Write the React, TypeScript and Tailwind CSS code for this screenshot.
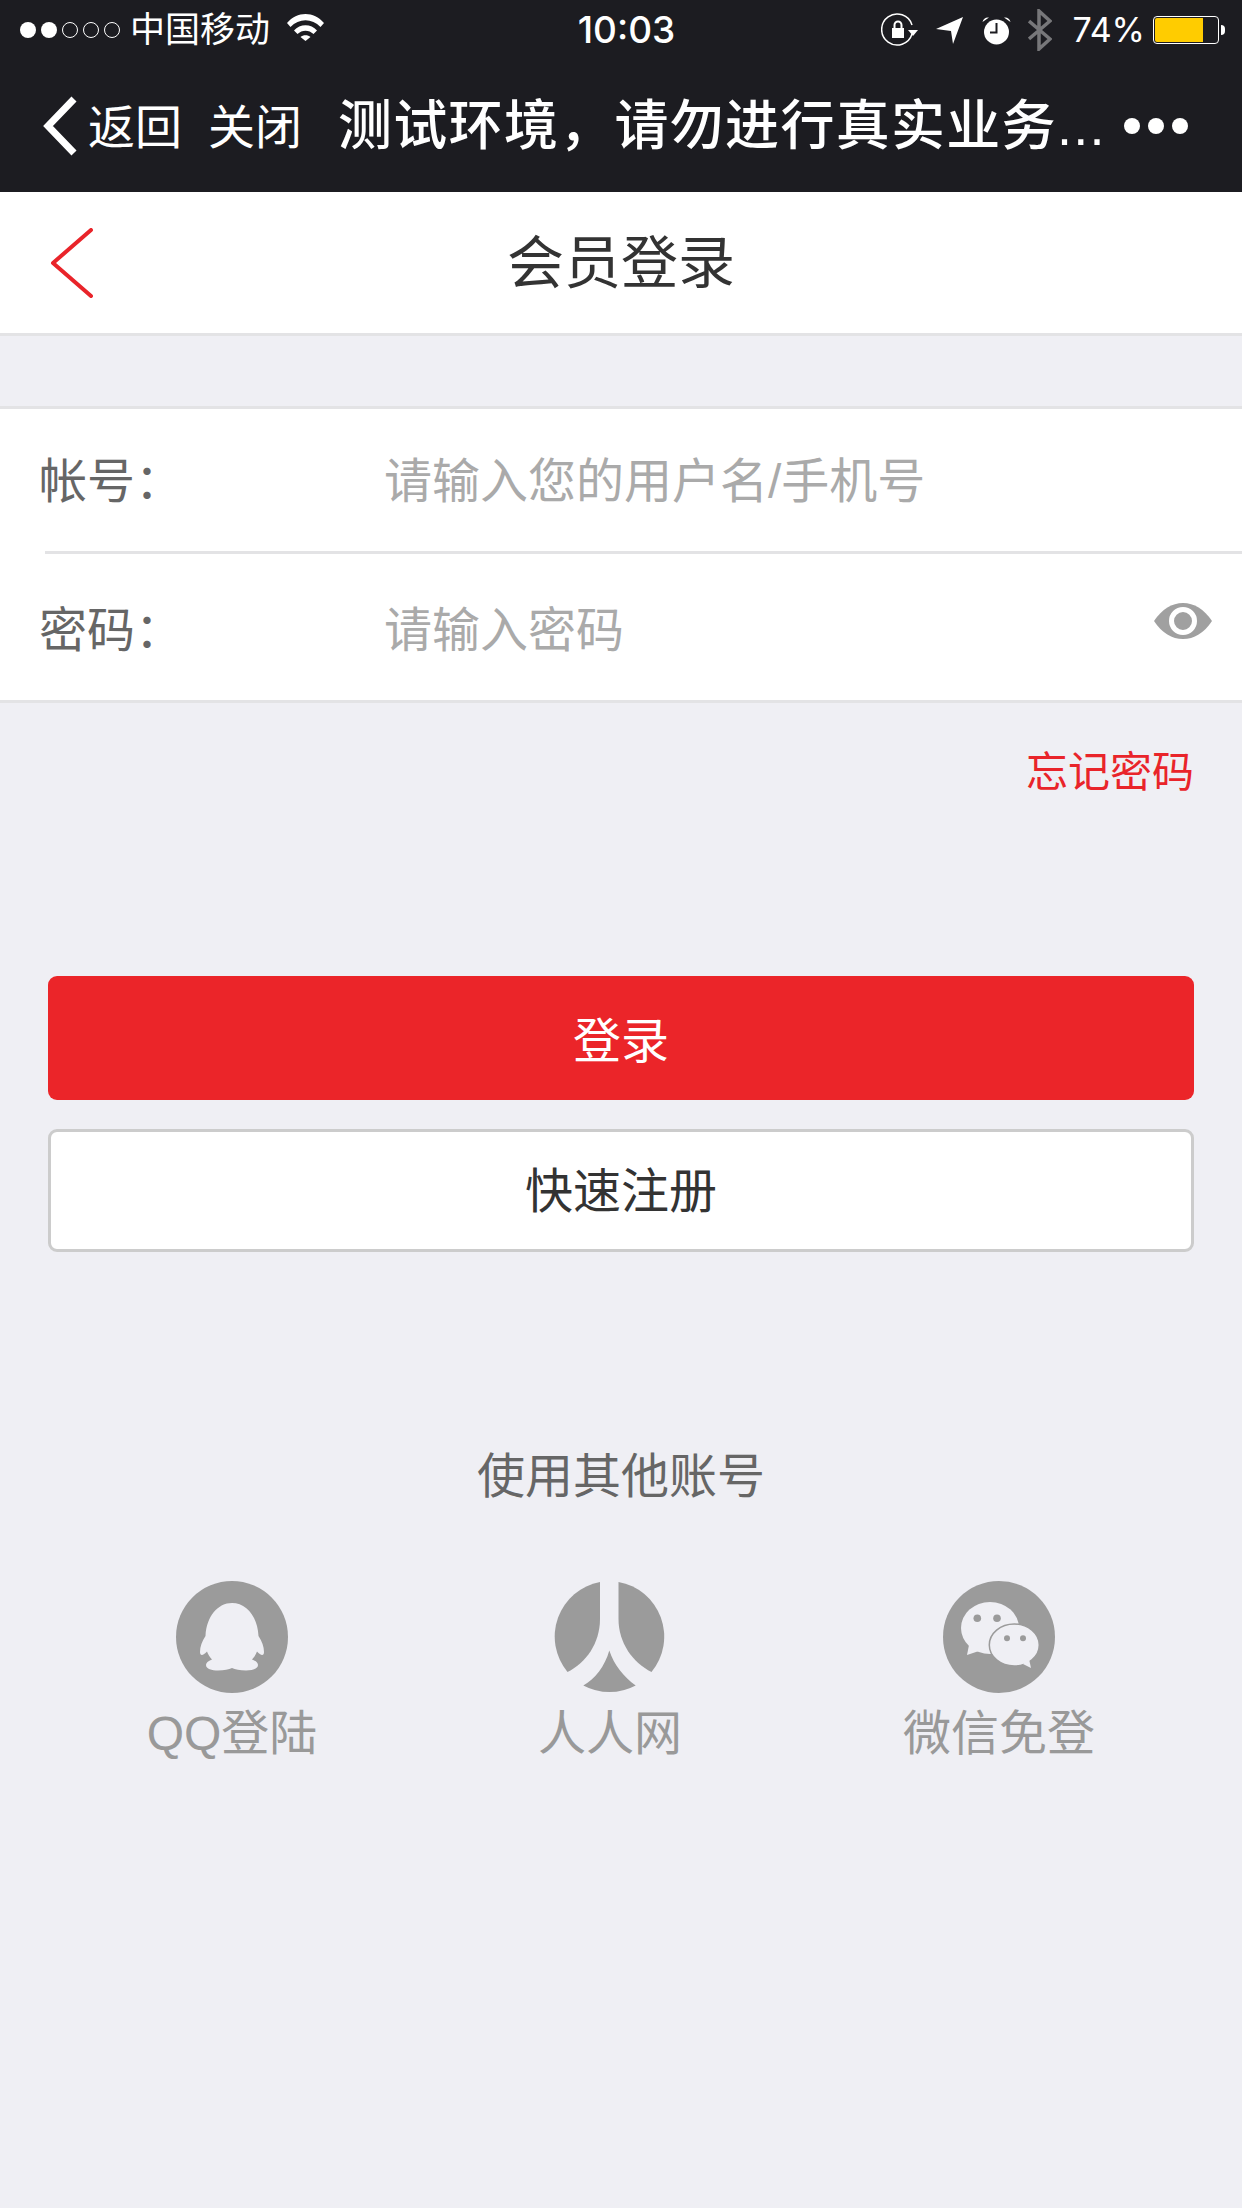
export default function App() {
  return (
    <div className="w-[1242px] h-[2208px] bg-[#efeff4] font-['Liberation_Sans','Noto_Sans_CJK_SC',sans-serif] overflow-hidden">
      <div className="h-[192px] bg-[#1c1c21] text-white">
        <StatusBar />
        <NavBar />
      </div>

      <div className="h-[144px] bg-white border-b-[3px] border-[#e3e3e5] flex items-center relative">
        <svg className="ml-[50px]" width="44" height="70" viewBox="0 0 44 70" fill="none">
          <path d="M41 2 L3 35 L41 68" stroke="#e9242a" strokeWidth="4" strokeLinecap="round" strokeLinejoin="round" />
        </svg>
        <div className="absolute inset-x-0 text-center text-[57px] leading-[70px] text-[#333]">会员登录</div>
      </div>

      <div className="mt-[70px] bg-white border-y-[3px] border-[#e3e3e5]">
        <div className="h-[142px] flex items-center pl-[39px] pt-[3px] text-[48px]">
          <span className="w-[345px] text-[#666]">帐号：</span>
          <span className="text-[#aaa]">请输入您的用户名/手机号</span>
        </div>
        <div className="ml-[45px] h-[3px] bg-[#e3e3e5]" />
        <div className="h-[146px] flex items-center pl-[39px] pr-[30px] pt-[8px] text-[48px]">
          <span className="w-[345px] text-[#666]">密码：</span>
          <span className="text-[#aaa]">请输入密码</span>
          <svg className="ml-auto mb-[20px]" width="58" height="36" viewBox="0 0 58 36">
            <path d="M0 18 C8 6 18 0 29 0 C40 0 50 6 58 18 C50 30 40 36 29 36 C18 36 8 30 0 18Z" fill="#a0a0a0" />
            <circle cx="29" cy="18" r="11.500" fill="#a0a0a0" stroke="#fff" strokeWidth="5" />
          </svg>
        </div>
      </div>

      <div className="mt-[42px] pr-[48px] text-right text-[42px] leading-[56px] text-[#e9242a]">忘记密码</div>

      <div className="mt-[175px] mx-[48px] flex flex-col gap-[29px]">
        <div className="h-[124px] pt-[7px] rounded-[9px] bg-[#eb2529] text-white text-[48px] flex items-center justify-center">登录</div>
        <div className="h-[123px] pt-[3px] rounded-[9px] bg-white border-[3px] border-[#ccc] text-[#333] text-[48px] flex items-center justify-center">快速注册</div>
      </div>

      <div className="mt-[191px] text-center text-[48px] leading-[68px] text-[#666]">使用其他账号</div>

      <div className="mt-[70px] flex pl-[132px]">
        <Social label="QQ登陆" icon={<QqIcon />} />
        <Social className="ml-[178px]" label="人人网" icon={<RenrenIcon />} />
        <Social className="ml-[189px]" label="微信免登" icon={<WechatIcon />} />
      </div>
    </div>
  );
}

function StatusBar() {
  return (
    <div className="h-[60px] pl-[20px] pr-[17px] grid grid-cols-[1fr_auto_1fr] items-center">
      <div className="flex items-center">
        <div className="flex gap-[5px]">
          <span className="w-[16px] h-[16px] rounded-full bg-white" />
          <span className="w-[16px] h-[16px] rounded-full bg-white" />
          <span className="w-[16px] h-[16px] rounded-full border border-white" />
          <span className="w-[16px] h-[16px] rounded-full border border-white" />
          <span className="w-[16px] h-[16px] rounded-full border border-white" />
        </div>
        <span className="ml-[10px] text-[35px] leading-[44px]">中国移动</span>
        <svg className="ml-[17px] mb-[6px]" width="37" height="27" viewBox="0 0 37 27" fill="#fff">
          <path d="M0 9 C10 -3 27 -3 37 9 L33.500 13 C25 4 12 4 3.500 13Z" />
          <path d="M7 16.500 C13 9.500 24 9.500 30 16.500 L26.500 20 C22 15.500 15 15.500 10.500 20Z" />
          <path d="M13.500 23 C16 20.500 21 20.500 23.500 23 L18.500 27Z" />
        </svg>
      </div>

      <span className="pl-[8px] font-['Inter'] font-medium text-[37px] leading-[44px]">10:03</span>

      <div className="flex items-center justify-end">
        <svg width="38" height="34" viewBox="0 0 38 34" fill="none">
          <path d="M31 21 A15.500 15.500 0 1 1 31 12" stroke="#fff" strokeWidth="1.500" />
          <path d="M27 17 H37 L32 23Z" fill="#fff" />
          <path d="M11 15 H23 V25 H11Z" fill="#fff" />
          <path d="M13.500 15 V12 A3.500 3.500 0 0 1 20.500 12 V15" stroke="#fff" strokeWidth="2" />
        </svg>
        <svg className="ml-[17px]" width="27" height="27" viewBox="0 0 27 27" fill="#fff">
          <path d="M27 0 L0 12 L15 14 L17 27Z" />
        </svg>
        <svg className="ml-[19px]" width="29" height="29" viewBox="0 0 29 29" fill="#fff">
          <circle cx="14.500" cy="16" r="12.500" />
          <path d="M0.500 6 A6 6 0 0 1 7 1.500Z M28.500 6 A6 6 0 0 0 22 1.500Z" />
          <path d="M14.500 7 V16.500 H8" fill="none" stroke="#1c1c21" strokeWidth="2" />
        </svg>
        <svg className="ml-[17px]" width="24" height="42" viewBox="0 0 24 42" fill="none">
          <path d="M1 12 L22 30 L11 40 V2 L22 12 L1 30" stroke="#77777a" strokeWidth="3.500" />
        </svg>
        <span className="ml-[20px] font-['Inter'] text-[34px] leading-[44px]">74%</span>
        <div className="ml-[8px] w-[66px] h-[28px] rounded-[4px] border border-white p-[1px] flex">
          <div className="w-[48px] h-full rounded-l-[2px] bg-[#ffcc00]" />
        </div>
        <span className="ml-[2px] w-[4px] h-[10px] rounded-r-full bg-white" />
      </div>
    </div>
  );
}

function NavBar() {
  return (
    <div className="h-[132px] flex items-center pl-[43px]">
      <svg width="34" height="60" viewBox="0 0 34 60" fill="none">
        <path d="M31 3 L5 30 L31 57" stroke="#fff" strokeWidth="7" />
      </svg>
      <span className="ml-[11px] mt-[4px] text-[47px] leading-[60px]">返回</span>
      <span className="ml-[26px] mt-[4px] text-[47px] leading-[60px]">关闭</span>
      <span className="ml-[36px] text-[54px] leading-[70px] font-medium tracking-[1.3px]">测试环境，请勿进行真实业务...</span>
      <div className="ml-[18px] flex gap-[8px]">
        <span className="w-[16px] h-[16px] rounded-full bg-white" />
        <span className="w-[16px] h-[16px] rounded-full bg-white" />
        <span className="w-[16px] h-[16px] rounded-full bg-white" />
      </div>
    </div>
  );
}

function Social({ label, icon, className = "" }: { label: string; icon: React.ReactNode; className?: string }) {
  return (
    <div className={`w-[200px] flex flex-col items-center ${className}`}>
      {icon}
      <span className="mt-[12px] text-[48px] leading-[58px] text-[#999]">{label}</span>
    </div>
  );
}

function QqIcon() {
  return (
    <svg width="112" height="112" viewBox="0 0 112 112">
      <circle cx="56" cy="56" r="56" fill="#9b9b9b" />
      <path
        d="M56 22 C42 22 30.500 35 29.500 55 C26 60 24 66 24 71 C24 75 27 75 31 70.500 C32 73 33.500 76 36 78.500 C32 80 30 82 30 84 C30 88 36 89.500 42 89.500 C48 89.500 53 88.500 56 87 C59 88.500 64 89.500 70 89.500 C76 89.500 82 88 82 84 C82 82 80 80 76 78.500 C78.500 76 80 73 81 70.500 C85 75 88 75 88 71 C88 66 86 60 82.500 55 C81.500 35 70 22 56 22Z"
        fill="#efeff4"
      />
    </svg>
  );
}

function RenrenIcon() {
  return (
    <svg width="112" height="112" viewBox="0 0 112 112" fill="#9b9b9b">
      <path d="M46 1 V38 C46 62 32 82 13.500 91 A55.500 55.500 0 0 1 46 1Z" />
      <path d="M64.500 1 V38 C64.500 62 79 82 97.500 91 A55.500 55.500 0 0 0 64.500 1Z" />
      <path d="M55.300 69.500 C60 84 70 96 81.700 104.500 A55.500 55.500 0 0 1 29.300 104.500 C41 98 51 85 55.300 69.500Z" />
    </svg>
  );
}

function WechatIcon() {
  return (
    <svg width="112" height="112" viewBox="0 0 112 112">
      <circle cx="56" cy="56" r="56" fill="#9b9b9b" />
      <ellipse cx="47" cy="47" rx="29" ry="26" fill="#efeff4" />
      <path d="M26 64 L24 74 L39 69Z" fill="#efeff4" />
      <circle cx="34.300" cy="37.300" r="3.800" fill="#9b9b9b" />
      <circle cx="54" cy="37.300" r="3.800" fill="#9b9b9b" />
      <ellipse cx="71.300" cy="64" rx="25" ry="21" fill="#efeff4" stroke="#9b9b9b" strokeWidth="1.500" />
      <path d="M80 83 L88 87 L86 78Z" fill="#efeff4" />
      <circle cx="64" cy="57.300" r="3" fill="#9b9b9b" />
      <circle cx="80" cy="57.300" r="3" fill="#9b9b9b" />
    </svg>
  );
}
